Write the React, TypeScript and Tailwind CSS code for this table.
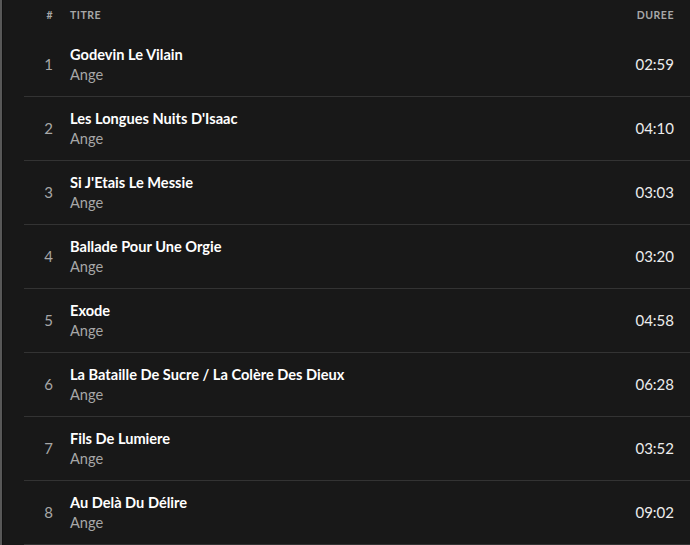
const tracks = [
  { title: "Godevin Le Vilain", artist: "Ange", duration: "02:59" },
  { title: "Les Longues Nuits D'Isaac", artist: "Ange", duration: "04:10" },
  { title: "Si J'Etais Le Messie", artist: "Ange", duration: "03:03" },
  { title: "Ballade Pour Une Orgie", artist: "Ange", duration: "03:20" },
  { title: "Exode", artist: "Ange", duration: "04:58" },
  { title: "La Bataille De Sucre / La Colère Des Dieux", artist: "Ange", duration: "06:28" },
  { title: "Fils De Lumiere", artist: "Ange", duration: "03:52" },
  { title: "Au Delà Du Délire", artist: "Ange", duration: "09:02" },
];

export default function App() {
  return (
    <div
      className="h-[545px] w-[690px] overflow-hidden bg-[#181818] border-l-2 border-[#585858]"
      style={{ fontFamily: "Lato, 'Noto Sans', sans-serif" }}
    >
      <div className="h-full border-l border-[#111] pl-[21px]">
        <div className="flex h-[33px] items-center pb-[2px] text-[10.5px] font-bold uppercase tracking-wider text-[#a7a7a7]">
          <div className="w-[46px] pr-[17px] text-right">#</div>
          <div className="flex-1">Titre</div>
          <div className="pr-[16px]">Duree</div>
        </div>
        {tracks.map((t, i) => (
          <div key={i} className="flex h-[64px] items-center border-b border-[#333]">
            <div className="w-[46px] pr-[17px] text-right text-[15px] text-[#a7a7a7]">{i + 1}</div>
            <div className="flex flex-1 flex-col">
              <span className="text-[14.6px] font-bold leading-[20px] text-white">{t.title}</span>
              <span className="text-[14.6px] leading-[20px] text-[#a7a7a7]">{t.artist}</span>
            </div>
            <div className="pr-[16px] text-[15px] text-[#ececec]">{t.duration}</div>
          </div>
        ))}
      </div>
    </div>
  );
}
